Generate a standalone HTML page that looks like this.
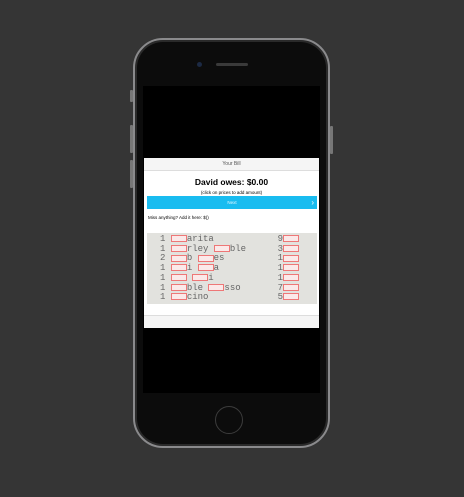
<!DOCTYPE html>
<html><head><style>
body{margin:0;width:464px;height:497px;background:#353535;position:relative;overflow:hidden;font-family:"Liberation Sans",sans-serif}
.phone{position:absolute;left:133px;top:38px;width:197px;height:410px;border-radius:30px;background:#0c0c0c;border:2px solid #8a8a8c;box-sizing:border-box;box-shadow:inset 0 0 0 2px #2a2a2a}
.screen{position:absolute;left:143px;top:86px;width:177px;height:307px;background:#000}
.btn{position:absolute;width:3px;background:#777;left:130px;border-radius:1px}
.modal{position:absolute;left:144px;top:158px;width:175px;height:170px;background:#fff}
.hdr{height:12px;background:#f5f5f5;border-bottom:1px solid #ddd;font-size:5px;color:#555;text-align:center;line-height:12px}
.ftr{position:absolute;bottom:0;left:0;right:0;height:12px;background:#f5f5f5;border-top:1px solid #ddd}
.rec{position:absolute;left:3px;top:75px;width:170px;height:71px;background:#e2e2de;font-family:"Liberation Mono",monospace;font-size:9px;color:#666;line-height:9.7px;padding-top:2px;box-sizing:border-box}
.rec div{position:relative;padding-left:13px}
.rec span{position:absolute;right:18px}
.rec i{display:inline-block;width:14px;height:5px;background:#fbe9e9;border:1px solid #e77;vertical-align:middle}
</style></head><body>
<div class="phone"></div>
<div class="btn" style="top:90px;height:12px"></div>
<div class="btn" style="top:125px;height:28px"></div>
<div class="btn" style="top:160px;height:28px"></div>
<div class="btn" style="left:330px;top:126px;height:28px"></div>
<div style="position:absolute;left:197px;top:62px;width:5px;height:5px;border-radius:50%;background:#1c2a44"></div>
<div style="position:absolute;left:216px;top:63px;width:32px;height:3px;border-radius:2px;background:#3a3a3a"></div>
<div class="screen"></div>
<div style="position:absolute;left:215px;top:406px;width:28px;height:28px;border-radius:50%;border:1.5px solid #3c3c3c;box-sizing:border-box"></div>
<div class="modal">
<div class="hdr">Your Bill</div>
<div style="text-align:center;font-weight:bold;font-size:8.5px;margin-top:6px">David owes: $0.00</div>
<div style="text-align:center;font-size:4.5px;margin-top:3px">(click on prices to add amount)</div>
<div style="position:absolute;left:3px;top:38px;width:170px;height:13px;background:#19bcf0;color:#e6f8ff;font-size:4.5px;text-align:center;line-height:13px">Next<span style="position:absolute;right:3px;font-size:8px;color:#fff">›</span></div>
<div style="position:absolute;left:4px;top:57px;font-size:4.5px">Miss anything? Add it here: $()</div>
<div class="rec">
<div>1 <i></i>arita<span>9<i></i></span></div>
<div>1 <i></i>rley <i></i>ble<span>3<i></i></span></div>
<div>2 <i></i>b <i></i>es<span>1<i></i></span></div>
<div>1 <i></i>i <i></i>a<span>1<i></i></span></div>
<div>1 <i></i> <i></i>i<span>1<i></i></span></div>
<div>1 <i></i>ble <i></i>sso<span>7<i></i></span></div>
<div>1 <i></i>cino<span>5<i></i></span></div>
</div>
<div class="ftr"></div>
</div>
</body></html>
